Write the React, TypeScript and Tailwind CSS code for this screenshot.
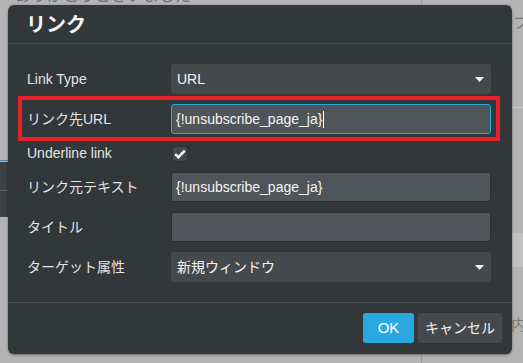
import React from 'react';

const font = { fontFamily: '"Liberation Sans", "Noto Sans CJK JP", sans-serif' };

interface RowProps {
  label: string;
  children: React.ReactNode;
}

const Row: React.FC<RowProps> = ({ label, children }) => (
  <div className="flex items-center h-[30px]">
    <label className="w-[144px] shrink-0 text-[14px] text-[#e4e4e4]">{label}</label>
    <div className="w-[320px] h-full">{children}</div>
  </div>
);

const Caret = () => (
  <svg width="9" height="5" viewBox="0 0 9 5" className="shrink-0">
    <path d="M0 0 H9 L4.5 5 Z" fill="#f2f2f2" />
  </svg>
);

const Select: React.FC<{ value: string }> = ({ value }) => (
  <div className="h-full w-full flex items-center justify-between rounded-[3px] bg-[#45494c] pl-[6px] pr-[7px] text-[14px] text-[#f4f4f4]">
    <span>{value}</span>
    <Caret />
  </div>
);

const TextInput: React.FC<{ value?: string; focused?: boolean }> = ({ value, focused }) => (
  <div
    className={`h-full w-full flex items-center rounded-[3px] bg-[#50555a] pl-[4px] text-[14px] text-[#f4f4f4] border ${
      focused ? 'border-[#2aa9e1]' : 'border-[#2c3033]'
    }`}
  >
    <span>{value}</span>
    {focused && <span className="ml-[1px] w-px h-[17px] bg-white" />}
  </div>
);

export default function App() {
  return (
    <div className="relative w-[523px] h-[363px] overflow-hidden bg-[#b4b4b4]" style={font}>
      {/* page behind the modal */}
      <div className="absolute left-[15px] top-[-16px] text-[16px] text-[#6e6e6e]">ありがとうございました</div>
      <div className="absolute left-[421px] top-0 h-full w-px bg-[#9c9c9c]" />
      <div className="absolute left-0 top-[160px] w-[10px] h-px bg-[#4a7fb2]" />
      <div className="absolute left-0 top-[162px] w-[10px] h-[55px] bg-[#3c4144]">
        <div className="mt-[28px] h-px bg-[#575c5f]" />
      </div>
      <div className="absolute left-[513px] top-[12px] text-[15px] text-[#7a7a7a]">フ</div>
      <div className="absolute left-[505px] top-[107px] w-[18px] h-px bg-[#cbcbcb]" />
      <div className="absolute left-[505px] top-[233px] w-[18px] h-[34px] bg-[#c1c1c1]" />
      <div className="absolute left-[511px] top-[314px] text-[15px] text-[#7a7a7a]">内</div>

      {/* modal */}
      <div className="absolute left-[8px] top-[5px] w-[504px] h-[349px] flex flex-col rounded-[6px] bg-[#323739] shadow-[0_1px_3px_rgba(0,0,0,0.4)]">
        <div className="h-[39px] shrink-0 flex items-center px-[18px] border-b border-[#464b4e]">
          <h1 className="text-[20px] font-bold text-[#f4f4f4]" style={{ fontFamily: '"Noto Sans CJK JP", sans-serif' }}>
            リンク
          </h1>
        </div>

        <div className="flex flex-col pl-[19px] pr-[21px] pt-[20px] pb-[20px]">
          <Row label="Link Type">
            <Select value="URL" />
          </Row>

          <div className="relative mt-[10px]">
            <div className="absolute left-[-9px] top-[-8px] right-[-9px] bottom-[-7px] border-[4px] border-[#e8202a]" />
            <Row label="リンク先URL">
              <TextInput value="{!unsubscribe_page_ja}" focused />
            </Row>
          </div>

          <div className="flex items-center h-[17px] mt-[11px]">
            <span className="w-[145px] shrink-0 text-[14px] text-[#e4e4e4]">Underline link</span>
            <div className="w-[16px] h-[16px] flex items-center justify-center rounded-[3px] bg-[#45494c] border border-[#2c3033]">
              <svg width="12" height="10" viewBox="0 0 12 10">
                <path d="M1.2 5.2 L4.4 8.2 L10.8 1.6" stroke="#fff" strokeWidth="2.4" fill="none" />
              </svg>
            </div>
          </div>

          <div className="mt-[10px]">
            <Row label="リンク元テキスト">
              <TextInput value="{!unsubscribe_page_ja}" />
            </Row>
          </div>
          <div className="mt-[10px]">
            <Row label="タイトル">
              <TextInput />
            </Row>
          </div>
          <div className="mt-[10px]">
            <Row label="ターゲット属性">
              <Select value="新規ウィンドウ" />
            </Row>
          </div>
        </div>

        <div className="flex-1 flex items-start justify-end gap-[4px] pt-[10px] pr-[10px] border-t border-[#45494c]">
          <button className="h-[30px] w-[51px] rounded-[3px] bg-[#2aa9e0] text-[15px] text-white">OK</button>
          <button className="h-[30px] w-[84px] rounded-[3px] bg-[#45494c] text-[14px] text-[#f0f0f0]">キャンセル</button>
        </div>
      </div>
    </div>
  );
}
